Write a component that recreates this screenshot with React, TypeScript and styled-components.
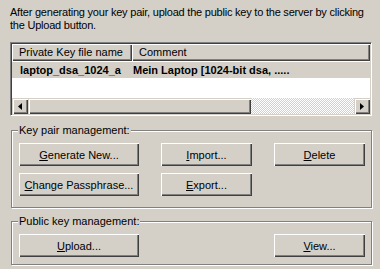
import styled, { createGlobalStyle } from 'styled-components'

const GlobalStyle = createGlobalStyle`
  html, body {
    margin: 0;
    padding: 0;
    background: #d4d0c8;
  }
  body {
    font-family: 'Liberation Sans', Arial, sans-serif;
    font-size: 11px;
    color: #000;
  }
`

const Page = styled.div`
  width: 380px;
  height: 269px;
  box-sizing: border-box;
  padding: 6px 8px 0 10px;
  display: flex;
  flex-direction: column;
`

const Intro = styled.p`
  margin: 0 0 10px;
  line-height: 13px;
  letter-spacing: -0.22px;
  white-space: nowrap;
`

const ListBox = styled.div`
  width: 362px;
  height: 74px;
  box-sizing: border-box;
  border: 1px solid;
  border-color: #808080 #fff #fff #808080;
  box-shadow: inset 1px 1px 0 #404040, inset -1px -1px 0 #d4d0c8;
  padding: 1px;
  display: flex;
  flex-direction: column;
  background: #fff;
`

const HeaderRow = styled.div`
  display: flex;
  height: 17px;
  flex-shrink: 0;
`

const HeaderCell = styled.div<{ $width?: number }>`
  ${({ $width }) => ($width ? `width: ${$width}px;` : 'flex: 1;')}
  box-sizing: border-box;
  background: #d4d0c8;
  box-shadow: inset 1px 1px 0 #fff, inset -1px -1px 0 #404040, inset -2px -2px 0 #808080;
  padding: 2px 0 0 7px;
  line-height: 13px;
  white-space: nowrap;
  overflow: hidden;
`

const Body = styled.div`
  flex: 1;
  padding-top: 1px;
  background: #fff;
`

const Row = styled.div`
  display: flex;
  height: 16px;
  background: #d4d0c8;
  font-weight: bold;
  line-height: 16px;
`

const Cell = styled.div<{ $width?: number; $pad: number }>`
  ${({ $width }) => ($width ? `width: ${$width}px;` : 'flex: 1;')}
  box-sizing: border-box;
  padding-left: ${({ $pad }) => $pad}px;
  white-space: nowrap;
  overflow: hidden;
`

const ScrollBar = styled.div`
  display: flex;
  height: 16px;
  flex-shrink: 0;
`

const Raised = styled.div`
  background: #d4d0c8;
  box-shadow: inset 1px 1px 0 #d4d0c8, inset 2px 2px 0 #fff, inset -1px -1px 0 #404040,
    inset -2px -2px 0 #808080;
`

const ArrowButton = styled(Raised)`
  width: 16px;
  height: 16px;
  flex-shrink: 0;
  display: flex;
  align-items: center;
  justify-content: center;
`

const Thumb = styled(Raised)`
  width: 223px;
`

const Track = styled.div`
  flex: 1;
  background: repeating-conic-gradient(#fff 0 25%, #d4d0c8 0 50%) 0 0 / 2px 2px;
`

const Group = styled.div<{ $height: number; $top: number }>`
  position: relative;
  margin: ${({ $top }) => $top}px 0 0 1px;
  width: 361px;
  height: ${({ $height }) => $height}px;
  box-sizing: border-box;
  border: 1px solid #808080;
  box-shadow: inset 1px 1px 0 #fff, 1px 1px 0 #fff;
  padding: 12px 8px 0 7px;
`

const GroupLabel = styled.span`
  position: absolute;
  top: -7px;
  left: 6px;
  padding: 0 1px;
  background: #d4d0c8;
  line-height: 13px;
`

const ButtonGrid = styled.div`
  display: grid;
  grid-template-columns: 120px 91px 91px;
  column-gap: 22px;
  row-gap: 7px;
`

const Button = styled.button<{ $col?: number }>`
  ${({ $col }) => ($col ? `grid-column: ${$col};` : '')}
  height: 23px;
  margin: 0;
  padding: 0;
  border: none;
  background: #d4d0c8;
  box-shadow: inset 1px 1px 0 #fff, inset -1px -1px 0 #404040, inset -2px -2px 0 #808080;
  font-family: inherit;
  font-size: 11px;
  color: #000;
  cursor: pointer;

  u {
    text-decoration: underline;
    text-underline-offset: 1px;
  }
`

function Arrow({ dir }: { dir: 'left' | 'right' }) {
  return (
    <svg width="4" height="7" viewBox="0 0 4 7">
      <path d={dir === 'left' ? 'M4 0 L0 3.5 L4 7 Z' : 'M0 0 L4 3.5 L0 7 Z'} fill="#000" />
    </svg>
  )
}

export default function App() {
  return (
    <>
      <GlobalStyle />
      <Page>
        <Intro>
          After generating your key pair, upload the public key to the server by clicking
          <br />
          the Upload button.
        </Intro>

        <ListBox>
          <HeaderRow>
            <HeaderCell $width={120}>Private Key file name</HeaderCell>
            <HeaderCell>Comment</HeaderCell>
          </HeaderRow>
          <Body>
            <Row>
              <Cell $width={120} $pad={8}>
                laptop_dsa_1024_a
              </Cell>
              <Cell $pad={1}>Mein Laptop [1024-bit dsa, .....</Cell>
            </Row>
          </Body>
          <ScrollBar>
            <ArrowButton>
              <Arrow dir="left" />
            </ArrowButton>
            <Thumb />
            <Track />
            <ArrowButton>
              <Arrow dir="right" />
            </ArrowButton>
          </ScrollBar>
        </ListBox>

        <Group $height={78} $top={14}>
          <GroupLabel>Key pair management:</GroupLabel>
          <ButtonGrid>
            <Button>
              <u>G</u>enerate New...
            </Button>
            <Button>
              <u>I</u>mport...
            </Button>
            <Button>
              <u>D</u>elete
            </Button>
            <Button>
              <u>C</u>hange Passphrase...
            </Button>
            <Button>
              <u>E</u>xport...
            </Button>
          </ButtonGrid>
        </Group>

        <Group $height={44} $top={13}>
          <GroupLabel>Public key management:</GroupLabel>
          <ButtonGrid>
            <Button>
              <u>U</u>pload...
            </Button>
            <Button $col={3}>
              <u>V</u>iew...
            </Button>
          </ButtonGrid>
        </Group>
      </Page>
    </>
  )
}
